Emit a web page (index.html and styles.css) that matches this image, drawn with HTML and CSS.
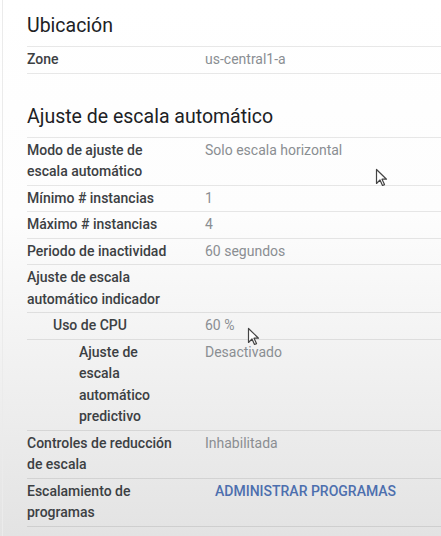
FILE: index.html
```html
<!DOCTYPE html>
<html lang="es">
<head>
<meta charset="utf-8">
<title>Ubicación y ajuste de escala</title>
<link rel="stylesheet" href="styles.css">
</head>
<body>
<main class="panel">
  <section class="section">
    <h2 class="section-title">Ubicación</h2>
    <dl class="props">
      <div class="row"><dt class="label">Zone</dt><dd class="value">us-central1-a</dd></div>
    </dl>
  </section>
  <section class="section">
    <h2 class="section-title">Ajuste de escala automático</h2>
    <dl class="props">
      <div class="row"><dt class="label">Modo de ajuste de escala automático</dt><dd class="value">Solo escala horizontal</dd></div>
      <div class="row"><dt class="label">Mínimo # instancias</dt><dd class="value">1</dd></div>
      <div class="row"><dt class="label">Máximo # instancias</dt><dd class="value">4</dd></div>
      <div class="row"><dt class="label">Periodo de inactividad</dt><dd class="value">60 segundos</dd></div>
      <div class="row"><dt class="label">Ajuste de escala automático indicador</dt><dd class="value"></dd></div>
      <div class="row level-1"><dt class="label">Uso de CPU</dt><dd class="value">60 %</dd></div>
      <div class="row level-2"><dt class="label">Ajuste de escala automático predictivo</dt><dd class="value">Desactivado</dd></div>
      <div class="row"><dt class="label">Controles de reducción de escala</dt><dd class="value">Inhabilitada</dd></div>
      <div class="row"><dt class="label">Escalamiento de programas</dt><dd class="value"><button class="link-button" type="button">Administrar programas</button></dd></div>
    </dl>
  </section>
</main>
<svg class="cursor cursor-a" width="13" height="19" viewBox="0 0 13 19" aria-hidden="true"><path d="M1.5 1.5 L1.5 15.5 L5 12 L7.5 17.5 L9.5 16.6 L7 11.2 L11.5 11.2 Z" fill="#fff" stroke="#444" stroke-width="1.2" stroke-linejoin="round"/></svg>
<svg class="cursor cursor-b" width="13" height="19" viewBox="0 0 13 19" aria-hidden="true"><path d="M1.5 1.5 L1.5 15.5 L5 12 L7.5 17.5 L9.5 16.6 L7 11.2 L11.5 11.2 Z" fill="#fff" stroke="#444" stroke-width="1.2" stroke-linejoin="round"/></svg>
</body>
</html>
```
FILE: styles.css
```css
html, body {
  margin: 0;
  padding: 0;
}

body {
  min-height: 100vh;
  font-family: Roboto, "Noto Sans", "Liberation Sans", sans-serif;
  background: linear-gradient(to bottom, #ffffff 0%, #fdfdfd 40%, #eeeeee 75%, #e3e3e3 100%);
  color: #202124;
}

.panel {
  margin-left: 2px;
  border-left: 1px solid #ebebeb;
  padding-left: 24px;
  min-height: 536px;
  box-sizing: border-box;
}

.section-title {
  margin: 0;
  padding-bottom: 8px;
  font-size: 19.5px;
  line-height: 24px;
  font-weight: 400;
  color: #202124;
}

.section:first-child .section-title {
  padding-top: 14px;
}

.section + .section .section-title {
  padding-top: 31px;
}

.props {
  margin: 0;
  border-top: 1px solid rgba(0, 0, 0, 0.09);
}

.row {
  display: grid;
  grid-template-columns: 178px 1fr;
  padding: 2px 0;
  border-bottom: 1px solid rgba(0, 0, 0, 0.09);
  font-size: 14px;
  line-height: 21.5px;
}

.label {
  margin: 0;
  padding-right: 26px;
  font-weight: 500;
  color: #3c4043;
}

.level-1 .label {
  padding-left: 26px;
}

.level-2 .label {
  padding-left: 52px;
}

.value {
  margin: 0;
  color: #8a8e92;
}

.link-button {
  margin: 0;
  padding: 0 10px;
  border: none;
  background: none;
  font-family: inherit;
  font-size: 14px;
  line-height: 21.5px;
  font-weight: 500;
  letter-spacing: 0;
  text-transform: uppercase;
  color: #4d6fae;
  cursor: pointer;
}

.cursor {
  position: absolute;
}

.cursor-a {
  left: 375px;
  top: 168px;
}

.cursor-b {
  left: 247px;
  top: 327px;
}
```
